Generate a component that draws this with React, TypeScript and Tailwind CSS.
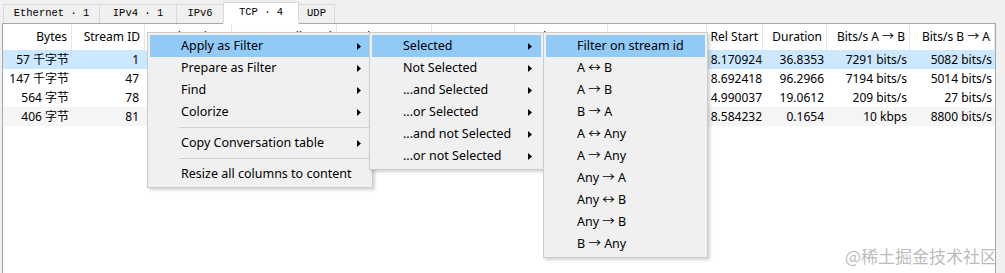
import React from 'react';

type Item = { label: string; sub?: boolean; active?: boolean } | 'sep';

const COLS = [
  { title: 'Bytes', w: 69 },
  { title: 'Stream ID', w: 73 },
  { title: 'Total Packets', w: 87 },
  { title: 'Percent Filtered', w: 105 },
  { title: 'Packets A → B', w: 95 },
  { title: 'Bytes A → B', w: 83 },
  { title: 'Packets B → A', w: 93 },
  { title: 'Bytes B → A', w: 99 },
  { title: 'Rel Start', w: 56 },
  { title: 'Duration', w: 64 },
  { title: 'Bits/s A → B', w: 83 },
  { title: 'Bits/s B → A', w: 85 },
];

// columns 2..7 sit under the open context menus, so their cells stay blank
const ROWS = [
  ['57 千字节', '1', '', '', '', '', '', '', '8.170924', '36.8353', '7291 bits/s', '5082 bits/s'],
  ['147 千字节', '47', '', '', '', '', '', '', '8.692418', '96.2966', '7194 bits/s', '5014 bits/s'],
  ['564 字节', '78', '', '', '', '', '', '', '4.990037', '19.0612', '209 bits/s', '27 bits/s'],
  ['406 字节', '81', '', '', '', '', '', '', '8.584232', '0.1654', '10 kbps', '8800 bits/s'],
];

const TABS = [
  { label: 'Ethernet · 1', w: 97 },
  { label: 'IPv4 · 1', w: 78 },
  { label: 'IPv6', w: 48 },
  { label: 'TCP · 4', w: 76, active: true },
  { label: 'UDP', w: 37 },
];

function Arrow() {
  return (
    <svg width="4" height="7" viewBox="0 0 4 7" className="absolute right-[9px] top-[8px]">
      <path d="M0 0 L4 3.5 L0 7 Z" fill="#000" />
    </svg>
  );
}

function Menu({ items, className }: { items: Item[]; className: string }) {
  return (
    <div className={`absolute bg-[#f0f0f0] border border-[#cccccc] p-[2px] text-[12.5px] shadow-[2px_2px_3px_rgba(0,0,0,0.18)] ${className}`}>
      {items.map((it, i) =>
        it === 'sep' ? (
          <div key={i} className="h-[9px] flex items-center pl-[29px] pr-[1px]">
            <div className="h-px w-full bg-[#d2d2d2]" />
          </div>
        ) : (
          <div
            key={i}
            className={`relative h-[22px] flex items-center pl-[31px] whitespace-nowrap ${it.active ? 'bg-[#91c9f7]' : ''}`}
          >
            {it.label}
            {it.sub && <Arrow />}
          </div>
        )
      )}
    </div>
  );
}

export default function App() {
  return (
    <div className="relative w-[1005px] h-[273px] overflow-hidden bg-[#f0f0f0] text-[12px] text-black font-['Noto_Sans','Noto_Sans_CJK_SC',sans-serif]">
      {/* tab bar */}
      <div className="flex items-end h-[23px] pl-[3px]">
        {TABS.map((t) => (
          <div
            key={t.label}
            style={{ width: t.w }}
            className={`flex items-center justify-center whitespace-pre font-['Liberation_Mono',monospace] text-[10.5px] border border-[#d9d9d9] -ml-px first:ml-0 ${
              t.active ? 'h-[22px] bg-white border-b-white relative z-10 mb-[-1px]' : 'h-[19px] bg-[#f0f0f0] border-b-0'
            }`}
          >
            {t.label}
          </div>
        ))}
      </div>

      {/* conversation table */}
      <div className="ml-[2px] w-[994px] h-[260px] bg-white border border-[#a8a8a8]">
        <div className="flex h-[26px]">
          {COLS.map((c) => (
            <div key={c.title} style={{ width: c.w }} className="shrink-0 flex items-center justify-end pr-[4px] border-r border-[#e5e5e5] whitespace-nowrap">
              {c.title}
            </div>
          ))}
        </div>
        {ROWS.map((r, ri) => (
          <div key={ri} className={`flex h-[19px] ${ri === 0 ? 'bg-[#cce8ff]' : ri === 3 ? 'bg-[#f5f5f5]' : 'bg-white'}`}>
            {r.map((v, ci) => (
              <div
                key={ci}
                style={{ width: COLS[ci].w }}
                className={`shrink-0 flex items-center justify-end whitespace-nowrap ${ci === 8 ? 'pr-[1px]' : ci === 1 ? 'pr-[6px]' : 'pr-[3px]'}`}
              >
                {v}
              </div>
            ))}
          </div>
        ))}
      </div>

      {/* context menus */}
      <Menu
        className="left-[147px] top-[32px] w-[226px]"
        items={[
          { label: 'Apply as Filter', sub: true, active: true },
          { label: 'Prepare as Filter', sub: true },
          { label: 'Find', sub: true },
          { label: 'Colorize', sub: true },
          'sep',
          { label: 'Copy Conversation table', sub: true },
          'sep',
          { label: 'Resize all columns to content' },
        ]}
      />
      <Menu
        className="left-[369px] top-[32px] w-[175px]"
        items={[
          { label: 'Selected', sub: true, active: true },
          { label: 'Not Selected', sub: true },
          { label: '...and Selected', sub: true },
          { label: '...or Selected', sub: true },
          { label: '...and not Selected', sub: true },
          { label: '...or not Selected', sub: true },
        ]}
      />
      <Menu
        className="left-[543px] top-[32px] w-[165px]"
        items={[
          { label: 'Filter on stream id', active: true },
          { label: 'A ↔ B' },
          { label: 'A → B' },
          { label: 'B → A' },
          { label: 'A ↔ Any' },
          { label: 'A → Any' },
          { label: 'Any → A' },
          { label: 'Any ↔ B' },
          { label: 'Any → B' },
          { label: 'B → Any' },
        ]}
      />

      {/* watermark */}
      <div className="absolute right-[8px] top-[244px] text-[17px] leading-[24px] text-[#a9a9a9]/80 whitespace-nowrap font-['Noto_Sans_CJK_SC',sans-serif]">
        @稀土掘金技术社区
      </div>
    </div>
  );
}
